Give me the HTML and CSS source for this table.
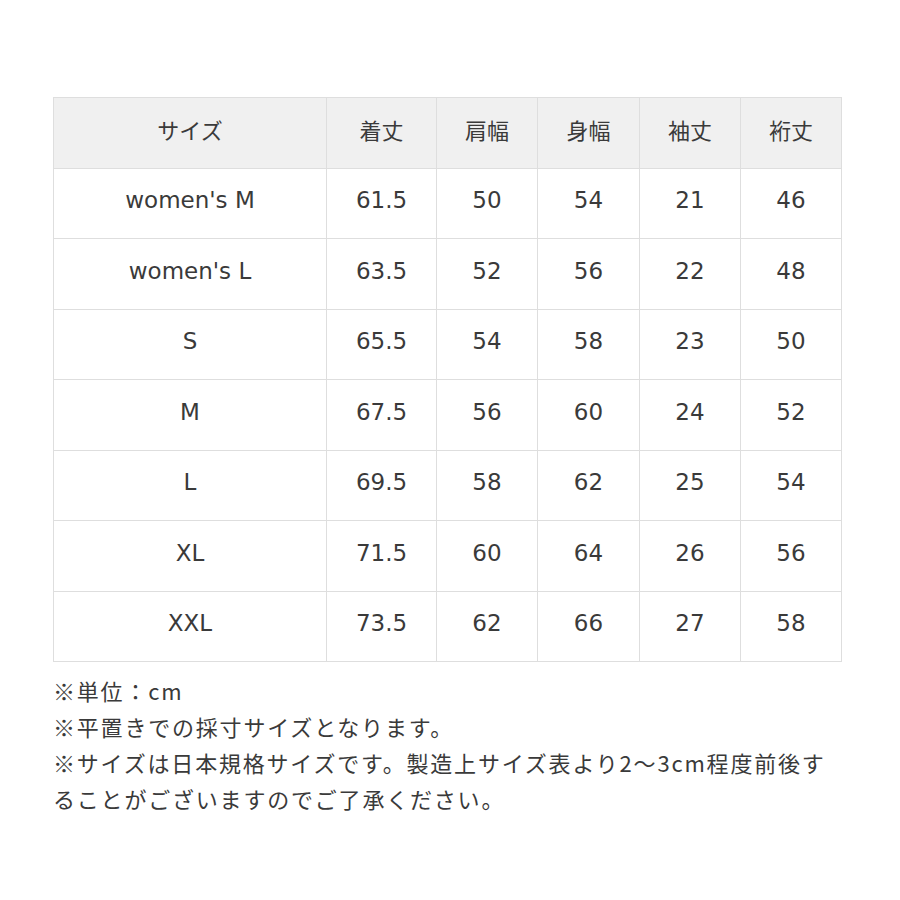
FILE: index.html
```html
<!DOCTYPE html>
<html lang="ja">
<head>
<meta charset="utf-8">
<link rel="stylesheet" href="styles.css">
</head>
<body>
<div class="page">
  <table class="size-table">
    <colgroup>
      <col class="c-size"><col class="c1"><col class="c2"><col class="c3"><col class="c4"><col class="c5">
    </colgroup>
    <thead>
      <tr><th>サイズ</th><th>着丈</th><th>肩幅</th><th>身幅</th><th>袖丈</th><th>裄丈</th></tr>
    </thead>
    <tbody>
      <tr><td>women's M</td><td>61.5</td><td>50</td><td>54</td><td>21</td><td>46</td></tr>
      <tr><td>women's L</td><td>63.5</td><td>52</td><td>56</td><td>22</td><td>48</td></tr>
      <tr><td>S</td><td>65.5</td><td>54</td><td>58</td><td>23</td><td>50</td></tr>
      <tr><td>M</td><td>67.5</td><td>56</td><td>60</td><td>24</td><td>52</td></tr>
      <tr><td>L</td><td>69.5</td><td>58</td><td>62</td><td>25</td><td>54</td></tr>
      <tr><td>XL</td><td>71.5</td><td>60</td><td>64</td><td>26</td><td>56</td></tr>
      <tr><td>XXL</td><td>73.5</td><td>62</td><td>66</td><td>27</td><td>58</td></tr>
    </tbody>
  </table>
  <div class="notes">
    <p>※単位：cm</p>
    <p>※平置きでの採寸サイズとなります。</p>
    <p>※サイズは日本規格サイズです。製造上サイズ表より2～3cm程度前後することがございますのでご了承ください。</p>
  </div>
</div>
</body>
</html>
```

FILE: styles.css
```css
html, body {
  margin: 0;
  padding: 0;
  background: #ffffff;
}
.page {
  padding: 97px 0 0 53px;
  font-family: "DejaVu Sans", "Noto Sans CJK JP", sans-serif;
  color: #3a3a3a;
}
.size-table {
  border-collapse: collapse;
  width: 788px;
  table-layout: fixed;
  font-size: 23px;
}
.c-size { width: 273px; }
.c1 { width: 110px; }
.c2 { width: 101px; }
.c3 { width: 102px; }
.c4 { width: 101px; }
.c5 { width: 101px; }
.size-table th,
.size-table td {
  box-sizing: border-box;
  border: 1px solid #dedede;
  text-align: center;
  vertical-align: middle;
  height: 70.5px;
  padding: 0 0 6px 0;
  line-height: 24px;
  font-weight: normal;
}
.size-table th {
  background: #f0f0f0;
  font-family: "Noto Sans CJK JP", sans-serif;
  font-size: 22px;
  padding-bottom: 8px;
}
.notes {
  margin-top: 10px;
  width: 788px;
  font-family: "Noto Sans CJK JP", sans-serif;
  font-size: 22px;
  line-height: 36px;
  letter-spacing: 1.8px;
}
.notes p {
  margin: 0;
}
```
